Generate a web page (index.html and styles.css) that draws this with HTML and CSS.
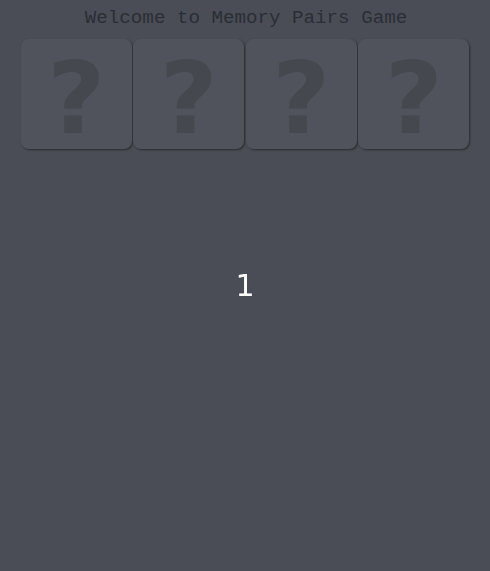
FILE: index.html
```html
<!DOCTYPE html>
<html>
<head>
<meta charset="utf-8">
<link rel="stylesheet" href="styles.css">
</head>
<body>
<h1 class="title">Welcome to Memory Pairs Game</h1>
<div class="board">
  <div class="card"><span class="mark">?</span></div>
  <div class="card"><span class="mark">?</span></div>
  <div class="card"><span class="mark">?</span></div>
  <div class="card"><span class="mark">?</span></div>
</div>
<div class="countdown">1</div>
</body>
</html>
```
FILE: styles.css
```css
html, body {
  margin: 0;
  height: 100%;
}
body {
  background: #4a4d55;
  padding-top: 7px;
  box-sizing: border-box;
}
.title {
  margin: 0;
  font-family: "Liberation Mono", monospace;
  font-weight: normal;
  font-size: 19.2px;
  line-height: 22px;
  color: #2a2d35;
  text-align: center;
  padding-left: 2px;
}
.board {
  display: flex;
  justify-content: center;
  margin-top: 10px;
}
.card {
  width: 111px;
  height: 110px;
  margin: 0 0.75px;
  background: #50535b;
  border-radius: 8px;
  box-shadow: 1px 1px 2px #2a2c32;
  display: flex;
  align-items: center;
  justify-content: center;
}
.mark {
  font-family: "DejaVu Sans", sans-serif;
  font-weight: bold;
  font-size: 100px;
  line-height: 1;
  color: #45484f;
  margin-top: 10px;
}
.countdown {
  position: fixed;
  inset: 0;
  display: flex;
  align-items: center;
  justify-content: center;
  font-family: "DejaVu Sans", sans-serif;
  font-size: 30px;
  color: #ffffff;
}
```
